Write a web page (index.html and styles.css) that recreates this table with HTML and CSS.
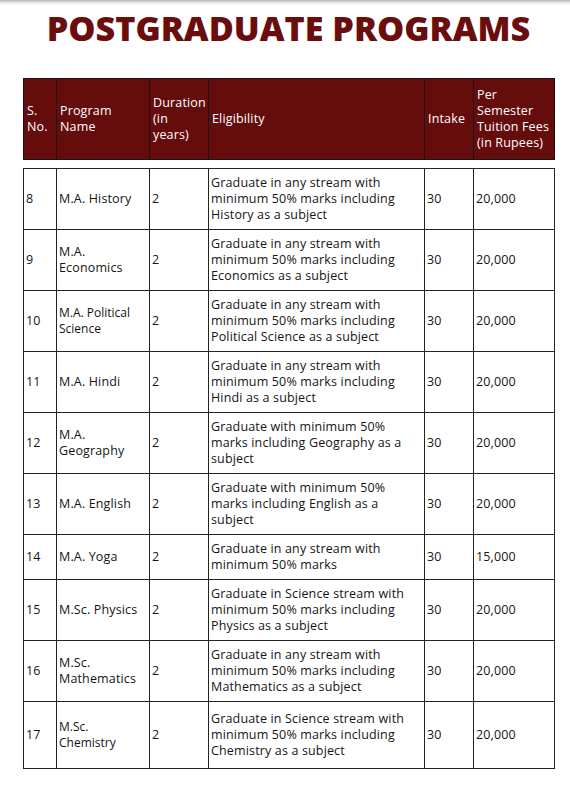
FILE: index.html
```html
<!DOCTYPE html>
<html lang="en">
<head>
<meta charset="utf-8">
<title>Postgraduate Programs</title>
<link rel="stylesheet" href="styles.css">
</head>
<body>
<div class="shade"></div>
<div class="page">
  <h1 class="title">POSTGRADUATE PROGRAMS</h1>
  <table class="grid head">
    <colgroup><col class="c1"><col class="c2"><col class="c3"><col class="c4"><col class="c5"><col class="c6"></colgroup>
    <tr>
      <th>S.<br>No.</th>
      <th>Program<br>Name</th>
      <th>Duration<br>(in<br>years)</th>
      <th>Eligibility</th>
      <th>Intake</th>
      <th>Per<br>Semester<br>Tuition Fees<br>(in Rupees)</th>
    </tr>
  </table>
  <table class="grid body">
    <colgroup><col class="c1"><col class="c2"><col class="c3"><col class="c4"><col class="c5"><col class="c6"></colgroup>
    <tr><td>8</td><td>M.A. History</td><td>2</td><td>Graduate in any stream with<br>minimum 50% marks including<br>History as a subject</td><td>30</td><td>20,000</td></tr>
    <tr><td>9</td><td>M.A.<br>Economics</td><td>2</td><td>Graduate in any stream with<br>minimum 50% marks including<br>Economics as a subject</td><td>30</td><td>20,000</td></tr>
    <tr><td>10</td><td class="sm">M.A. Political<br>Science</td><td>2</td><td>Graduate in any stream with<br>minimum 50% marks including<br>Political Science as a subject</td><td>30</td><td>20,000</td></tr>
    <tr><td>11</td><td>M.A. Hindi</td><td>2</td><td>Graduate in any stream with<br>minimum 50% marks including<br>Hindi as a subject</td><td>30</td><td>20,000</td></tr>
    <tr><td>12</td><td>M.A.<br>Geography</td><td>2</td><td>Graduate with minimum 50%<br>marks including Geography as a<br>subject</td><td>30</td><td>20,000</td></tr>
    <tr><td>13</td><td>M.A. English</td><td>2</td><td>Graduate with minimum 50%<br>marks including English as a<br>subject</td><td>30</td><td>20,000</td></tr>
    <tr><td>14</td><td>M.A. Yoga</td><td>2</td><td>Graduate in any stream with<br>minimum 50% marks</td><td>30</td><td>15,000</td></tr>
    <tr><td>15</td><td>M.Sc. Physics</td><td>2</td><td>Graduate in Science stream with<br>minimum 50% marks including<br>Physics as a subject</td><td>30</td><td>20,000</td></tr>
    <tr><td>16</td><td>M.Sc.<br>Mathematics</td><td>2</td><td>Graduate in any stream with<br>minimum 50% marks including<br>Mathematics as a subject</td><td>30</td><td>20,000</td></tr>
    <tr class="last"><td>17</td><td class="sm">M.Sc.<br>Chemistry</td><td>2</td><td>Graduate in Science stream with<br>minimum 50% marks including<br>Chemistry as a subject</td><td>30</td><td>20,000</td></tr>
  </table>
</div>
</body>
</html>
```
FILE: styles.css
```css
html, body {
  margin: 0;
  padding: 0;
  background: #ffffff;
}
body {
  font-family: "Open Sans", "Liberation Sans", sans-serif;
  color: #111111;
}
.shade {
  height: 5px;
  background: linear-gradient(to bottom, #b4b4b4 0%, #e6e6e6 50%, #ffffff 100%);
}
.page {
  padding: 1px 0 0 23px;
  width: 531px;
}
.title {
  margin: 0;
  text-align: center;
  font-family: "Open Sans", "Liberation Sans", sans-serif;
  font-weight: 800;
  font-size: 34.2px;
  line-height: 44px;
  color: #6a0d0d;
  letter-spacing: 0;
}
.grid {
  width: 531px;
  border-collapse: collapse;
  table-layout: fixed;
  font-size: 12.5px;
  line-height: 16px;
  letter-spacing: 0.15px;
}
.c1 { width: 33px; }
.c2 { width: 93px; }
.c3 { width: 59px; }
.c4 { width: 216px; }
.c5 { width: 49px; }
.c6 { width: 81px; }
.head {
  margin-top: 28px;
}
.head th {
  background: #650c0c;
  color: #ffffff;
  font-weight: 400;
  text-align: left;
  vertical-align: middle;
  padding: 0 3px;
  height: 80px;
  border: 1.5px solid #1c1414;
}
.body {
  margin-top: 8px;
}
.body td {
  border: 1.5px solid #222222;
  padding: 6px 2px 6px 2px;
  vertical-align: middle;
  color: #151515;
  white-space: nowrap;
}
.body td.sm {
  font-size: 12px;
  letter-spacing: 0;
}
.body tr.last td {
  padding-top: 9px;
  padding-bottom: 9px;
}
```
